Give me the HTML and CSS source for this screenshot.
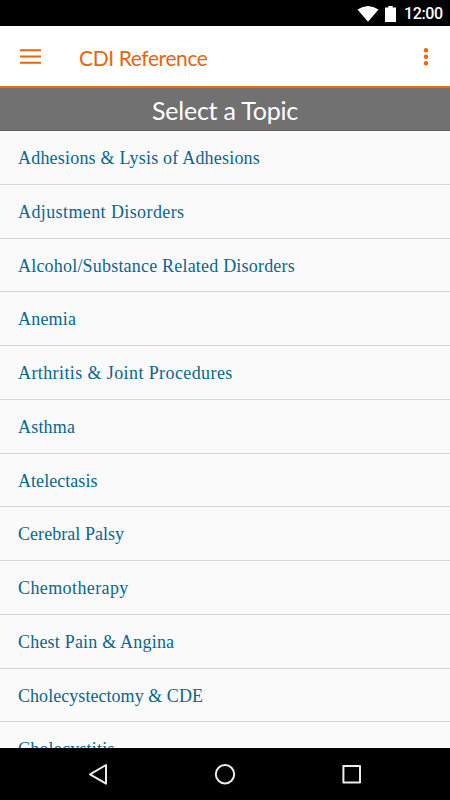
FILE: index.html
```
<!DOCTYPE html>
<html lang="en">
	<head>
		<meta charset="utf-8">
		<title>CDI Reference</title>
		<link rel="stylesheet" href="styles.css">
	</head>

	<body>
		<div class="statusbar">
			<svg class="wifi" width="22" height="16" viewBox="0 0 22 16"><path d="M0.5 3.6Q11 -3.6 21.5 3.6L11 15.7Z"/></svg>
			<svg class="battery" width="11" height="16" viewBox="0 0 11 16"><path d="M3.3 0H7.7V1.6H11V16H0V1.6H3.3Z"/></svg>
			<span class="clock">12:00</span>
		</div>

		<header class="toolbar">
			<svg class="menu" width="21" height="15" viewBox="0 0 21 15"><path d="M0 1.2H21M0 7.5H21M0 13.7H21"/></svg>
			<h1 class="title">CDI Reference</h1>
			<svg class="more" width="6" height="20" viewBox="0 0 6 20"><circle cx="3" cy="4.2" r="2.2"/><circle cx="3" cy="10.8" r="2.2"/><circle cx="3" cy="17.3" r="2.2"/></svg>
		</header>

		<h2 class="heading">Select a Topic</h2>

		<ul class="topics">
			<li>Adhesions &amp; Lysis of Adhesions</li>
			<li class="wide">Adjustment Disorders</li>
			<li>Alcohol/Substance Related Disorders</li>
			<li>Anemia</li>
			<li class="wide">Arthritis &amp; Joint Procedures</li>
			<li>Asthma</li>
			<li class="narrow">Atelectasis</li>
			<li class="narrow">Cerebral Palsy</li>
			<li class="wide">Chemotherapy</li>
			<li>Chest Pain &amp; Angina</li>
			<li class="narrow">Cholecystectomy &amp; CDE</li>
			<li>Cholecystitis</li>
		</ul>

		<nav class="navbar">
			<svg width="24" height="24" viewBox="0 0 24 24"><path d="M20 3V21.7L4 12.4Z"/></svg>
			<svg width="24" height="24" viewBox="0 0 24 24"><circle cx="12" cy="12.3" r="9.2"/></svg>
			<svg width="24" height="24" viewBox="0 0 24 24"><rect x="3.4" y="4" width="16.6" height="16.6"/></svg>
		</nav>
	</body>
</html>
```
FILE: styles.css
```
* {
	box-sizing: border-box;
}
body {
	margin: 0;
	height: 800px;
	display: flex;
	flex-direction: column;
	overflow: hidden;
	background-color: #fafafa;
	font-family: Lato, "Open Sans", sans-serif;
}
.statusbar {
	flex: none;
	height: 26px;
	padding: 1px 8px 0 0;
	display: flex;
	justify-content: flex-end;
	align-items: center;
	background-color: #000;
	color: #fff;
}
.statusbar svg {
	fill: #fff;
}
.battery {
	margin-left: 6px;
}
.clock {
	width: 39px;
	margin-left: 8px;
	margin-right: -1px;
	font: 500 16px/24px Roboto, sans-serif;
	letter-spacing: -0.4px;
	white-space: nowrap;
}
.toolbar {
	flex: none;
	height: 62px;
	padding: 0 21px 0 20px;
	display: flex;
	align-items: center;
	background-color: #fff;
	border-bottom: 2px solid #ec6a0c;
}
.menu {
	stroke: #ec6608;
	stroke-width: 2;
}
.title {
	flex: 1;
	margin: 3px 0 0 38px;
	font-size: 21px;
	font-weight: 400;
	letter-spacing: -0.4px;
	color: #e9650b;
}
.more {
	fill: #ec6608;
}
.heading {
	flex: none;
	height: 43px;
	margin: 0;
	padding-top: 1px;
	background-color: #717171;
	border-bottom: 1px solid #606060;
	color: #fff;
	font-size: 25px;
	font-weight: 400;
	letter-spacing: -0.2px;
	line-height: 42px;
	text-align: center;
}
.topics {
	flex: 1;
	min-height: 0;
	margin: 0;
	padding: 0;
	overflow: hidden;
	list-style: none;
	font-family: "Liberation Serif", serif;
	font-size: 18px;
	letter-spacing: 0.2px;
	color: #086691;
}
.topics li {
	height: 53.75px;
	padding-left: 18px;
	border-bottom: 1px solid #d6d6d6;
	line-height: 54px;
	white-space: nowrap;
}
.topics .wide {
	letter-spacing: 0.4px;
}
.topics .narrow {
	letter-spacing: 0.05px;
}
.navbar {
	flex: none;
	height: 52px;
	padding: 0 86px;
	display: flex;
	justify-content: space-between;
	align-items: center;
	background-color: #000;
}
.navbar svg {
	fill: none;
	stroke: #ececec;
	stroke-width: 2;
	stroke-linejoin: round;
}
```
